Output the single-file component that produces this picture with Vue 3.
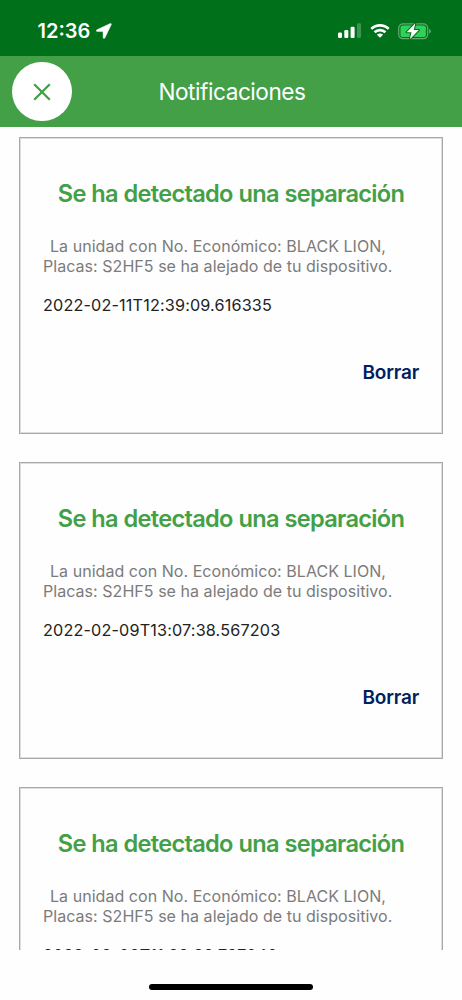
<template>
  <div class="screen">
    <!-- status bar -->
    <div class="status-bar">
      <div class="status-left">
        <span class="clock">12:36</span>
        <svg class="location" viewBox="0 0 16 16" width="16" height="16">
          <path
            d="M14.2 .5 L.9 6.7 C-.1 7.2 .1 8.5 1.2 8.5 L7 8.6 L7.1 14.4 C7.1 15.7 8.5 15.9 9 14.8 L15.3 1.6 C15.7 .8 15 .1 14.2 .5Z"
            fill="#fff"
            stroke="#fff"
            stroke-width=".4"
          />
        </svg>
      </div>
      <div class="status-right">
        <svg viewBox="0 0 24 16" width="24" height="16">
          <rect x="0" y="9.6" width="4" height="5.4" rx="1.2" fill="#fff" />
          <rect x="6.3" y="7" width="4" height="8" rx="1.2" fill="#fff" />
          <rect x="12.6" y="3.7" width="4" height="11.3" rx="1.2" fill="#fff" />
          <rect x="19" y="0.3" width="4" height="14.7" rx="1.2" fill="#fff" opacity=".25" />
        </svg>
        <svg class="wifi" viewBox="0 0 20 16" width="20" height="16">
          <g fill="none" stroke="#fff" stroke-width="2.6">
            <path d="M1.3 5.9 A12.4 12.4 0 0 1 18.7 5.9" />
            <path d="M4.6 9.3 A7.7 7.7 0 0 1 15.4 9.3" />
          </g>
          <path d="M10 14.8 L6.9 11.7 A4.4 4.4 0 0 1 13.1 11.7Z" fill="#fff" />
        </svg>
        <svg class="battery" viewBox="0 0 34 17" width="34" height="17">
          <rect x=".7" y=".9" width="29" height="14.8" rx="4.2" fill="none" stroke="#fff" stroke-opacity=".4" stroke-width="1.2" />
          <path d="M31.1 5.8 Q32.8 6.5 32.8 8.3 Q32.8 10.1 31.1 10.8Z" fill="#fff" opacity=".4" />
          <rect x="2.5" y="2.6" width="25.4" height="11.4" rx="2.6" fill="#30d158" />
          <path
            d="M17.3 .3 L8.6 9.3 H13.5 L11.9 16.2 L20.9 7 H15.8Z"
            fill="#fff"
            stroke="#00701a"
            stroke-width="2"
            stroke-linejoin="round"
            paint-order="stroke"
          />
        </svg>
      </div>
    </div>

    <!-- header -->
    <header class="nav-bar">
      <button class="btn-close" aria-label="Cerrar">
        <svg viewBox="0 0 18 18" width="18" height="18">
          <path d="M1.2 1.2 L16.8 16.8 M16.8 1.2 L1.2 16.8" stroke="#43a047" stroke-width="2.3" />
        </svg>
      </button>
      <h1 class="nav-title">Notificaciones</h1>
    </header>

    <!-- notifications -->
    <main class="list">
      <article v-for="item in notifications" :key="item.date" class="card">
        <h2 class="card-title">Se ha detectado una separación</h2>
        <p class="card-text">
          <span class="line line-first">La unidad con No. Económico: {{ item.unit }},</span>
          <span class="line">Placas: {{ item.plates }} se ha alejado de tu dispositivo.</span>
        </p>
        <p class="card-date">{{ item.date }}</p>
        <button class="btn-delete" @click="remove(item)">Borrar</button>
      </article>
    </main>

    <footer class="home-area">
      <div class="home-indicator"></div>
    </footer>
  </div>
</template>

<script setup>
import { ref } from "vue";

const notifications = ref([
  { unit: "BLACK LION", plates: "S2HF5", date: "2022-02-11T12:39:09.616335" },
  { unit: "BLACK LION", plates: "S2HF5", date: "2022-02-09T13:07:38.567203" },
  { unit: "BLACK LION", plates: "S2HF5", date: "2022-02-08T11:28:28.787040" },
]);

function remove(item) {
  notifications.value = notifications.value.filter((n) => n !== item);
}
</script>

<style>
body {
  margin: 0;
  background: #fefefe;
}
</style>

<style scoped>
.screen {
  display: flex;
  flex-direction: column;
  width: 462px;
  height: 1000px;
  overflow: hidden;
  background: #fefefe;
  font-family: Inter, "Liberation Sans", sans-serif;
}

/* status bar */
.status-bar {
  display: flex;
  justify-content: space-between;
  height: 56px;
  padding: 0 30.5px 0 37.5px;
  box-sizing: border-box;
  background: #00701a;
  flex-shrink: 0;
}

.status-left {
  display: flex;
  align-items: flex-start;
}

.clock {
  margin-top: 19px;
  font-size: 20px;
  line-height: 24px;
  font-weight: 600;
  color: #fff;
}

.location {
  margin: 23px 0 0 5.5px;
}

.status-right {
  display: flex;
  align-items: flex-start;
  padding-top: 23px;
}

.wifi {
  margin-left: 7.5px;
}

.battery {
  margin-left: 8px;
}

/* header */
.nav-bar {
  display: grid;
  grid-template-columns: 60px 1fr 60px;
  align-items: center;
  height: 71px;
  padding: 0 12px;
  box-sizing: border-box;
  background: #43a047;
  flex-shrink: 0;
}

.btn-close {
  display: flex;
  align-items: center;
  justify-content: center;
  width: 59.5px;
  height: 59.5px;
  padding: 0;
  border: none;
  border-radius: 50%;
  background: #fff;
}

.nav-title {
  margin: 0 -2px 0 0;
  font-size: 22.6px;
  line-height: 28px;
  font-weight: 400;
  letter-spacing: -0.45px;
  text-align: center;
  color: #fff;
}

/* list */
.list {
  flex: 1;
  display: flex;
  flex-direction: column;
  gap: 28px;
  padding: 10px 19px 0;
  overflow: hidden;
}

.card {
  display: flex;
  flex-direction: column;
  flex-shrink: 0;
  height: 297px;
  padding: 40px 23px 0;
  box-sizing: border-box;
  border: 1px solid #a9a9a9;
  box-shadow: inset 0 0 0 1px #dedede;
}

.card-title {
  margin: 0;
  font-size: 23.6px;
  line-height: 32px;
  font-weight: 600;
  letter-spacing: -0.7px;
  word-spacing: 0.4px;
  text-align: center;
  white-space: nowrap;
  color: #43a047;
}

.card-text {
  margin: 26px 0 0;
  font-size: 16px;
  line-height: 20px;
  letter-spacing: 0.045px;
  color: #7b7b7b;
}

.line {
  display: block;
  white-space: nowrap;
}

.line-first {
  padding-left: 7px;
}

.card-date {
  margin: 19px 0 0;
  font-size: 16.2px;
  line-height: 20px;
  letter-spacing: 0.16px;
  color: #222;
}

.btn-delete {
  align-self: flex-end;
  margin-top: 45px;
  padding: 0;
  border: none;
  background: none;
  font-family: inherit;
  font-size: 19px;
  line-height: 26px;
  font-weight: 600;
  letter-spacing: -0.2px;
  color: #002060;
}

/* home indicator */
.home-area {
  display: flex;
  justify-content: center;
  height: 50px;
  flex-shrink: 0;
}

.home-indicator {
  width: 164px;
  height: 6px;
  margin-top: 34px;
  border-radius: 3px;
  background: #000;
}
</style>
